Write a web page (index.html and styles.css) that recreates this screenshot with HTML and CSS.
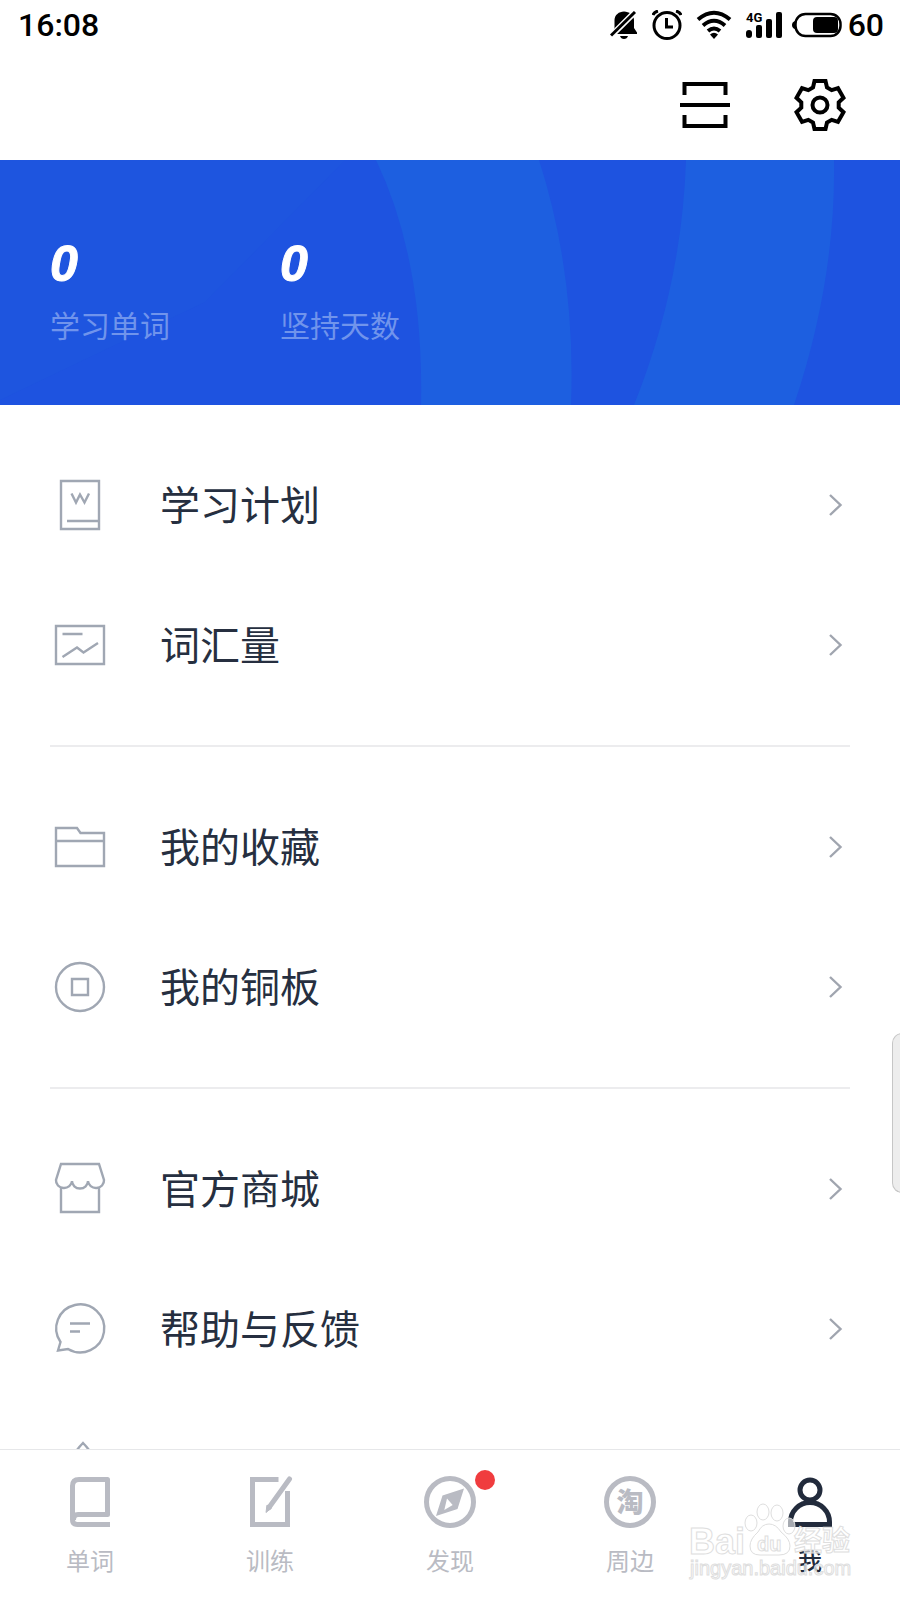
FILE: index.html
```html
<!DOCTYPE html>
<html lang="zh-CN">
<head>
<meta charset="utf-8">
<meta name="viewport" content="width=device-width, initial-scale=1">
<title>我</title>
<link rel="stylesheet" href="styles.css">
</head>
<body>
<div class="app">
  <div class="status">
    <span class="status-time">16:08</span>
    <div class="status-icons">
      <svg width="28" height="28" viewBox="0 0 28 28"><path d="M14 0.500C19 0.500 24 4 24 9V17L27 21.500V23H2L4.500 17V9C4.500 4 9 0.500 14 0.500ZM10 25H18Q17 28 14 28T10 25Z"/><path d="M2 24L26 0" stroke="#fff" stroke-width="6"/><path d="M1 24.500L25 1" stroke="#000" stroke-width="3"/></svg>
      <svg width="30" height="30" viewBox="0 0 30 30" fill="none" stroke="#000" stroke-width="3"><circle cx="15" cy="15.500" r="13"/><path d="M14.500 8V17H21"/><path d="M1 5Q2 2 6 1M24 1Q28 2 29 5"/></svg>
      <svg width="36" height="30" viewBox="0 0 36 30" fill="none" stroke="#000" stroke-width="4"><path d="M2 9.500Q18 -4 34 9.500M7 15.500Q18 6 29 15.500M12 21Q18 16 24 21"/><path d="M14 24.500Q18 21 22 24.500L18 29Z" fill="#000" stroke="none"/></svg>
      <svg class="signal" width="36" height="32" viewBox="0 0 36 32"><text x="0" y="13" class="net-label">4G</text><rect x="0" y="21" width="6" height="8" rx="3"/><rect x="10" y="16" width="6" height="13" rx="2"/><rect x="20" y="10" width="6" height="19" rx="2"/><rect x="30" y="3" width="6" height="26" rx="2"/></svg>
      <svg class="battery" width="50" height="26" viewBox="0 0 50 26"><rect x="3.500" y="2" width="45" height="22" rx="10" fill="none" stroke="#000" stroke-width="2.500"/><path d="M3 9V17Q0 16 0 13T3 9Z"/><rect x="21" y="5" width="25" height="16" rx="4"/></svg>
      <span class="status-level">60</span>
    </div>
  </div>
  <header class="topbar">
    <button class="icon-btn" type="button" aria-label="扫一扫"><svg width="50" height="52" viewBox="0 0 50 52" fill="none" stroke="#000" stroke-width="4"><path d="M4.500 16V5H45.500V16M0 26H50M4.500 36V47H45.500V36"/></svg></button>
    <button class="icon-btn" type="button" aria-label="设置"><svg width="52" height="52" viewBox="-26 -26 52 52" fill="none" stroke="#000" stroke-width="4"><path d="M-7 -17.500L-5.500 -24H5.500L7 -17.500L11.700 -14.800L18 -16.800L23.500 -7.200L18.700 -2.700V2.700L23.500 7.200L18 16.800L11.700 14.800L7 17.500L5.500 24H-5.500L-7 17.500L-11.700 14.800L-18 16.800L-23.500 7.200L-18.700 2.700V-2.700L-23.500 -7.200L-18 -16.800L-11.700 -14.800Z"/><circle r="7.500"/></svg></button>
  </header>
  <section class="banner">
    <svg class="banner-art" viewBox="0 0 900 245" preserveAspectRatio="none" aria-hidden="true"><path d="M0 0H345L205 142L0 240Z" fill="#1e56dd" opacity=".6"/><path d="M376 0Q424 100 421 245H571Q576 115 539 0Z" fill="#1d5fe0"/><path d="M686 0Q682 125 634 245H794Q836 120 834 0Z" fill="#1d5fe0"/></svg>
    <div class="stat"><strong class="stat-value">0</strong><span class="stat-label">学习单词</span></div>
    <div class="stat"><strong class="stat-value">0</strong><span class="stat-label">坚持天数</span></div>
  </section>
  <main class="menu">
    <div class="group">
      <a class="row" href="#plan"><svg class="row-icon" viewBox="0 0 60 60"><path d="M11 6H49V54H11ZM17 46H49"/><path d="M21.500 18.500L26 27.500L30 19.500L34.500 27.500L39 18.500"/></svg><span class="row-text">学习计划</span><svg class="chevron" viewBox="0 0 24 24"><path d="M4 2L14.500 12L4 22"/></svg></a>
      <a class="row" href="#vocabulary"><svg class="row-icon" viewBox="0 0 60 60"><path d="M6 11H54V49H6ZM12.500 19H32.500M12.500 42L27 32.500L33.500 37.500L48 28"/></svg><span class="row-text">词汇量</span><svg class="chevron" viewBox="0 0 24 24"><path d="M4 2L14.500 12L4 22"/></svg></a>
    </div>
    <div class="group">
      <a class="row" href="#favorites"><svg class="row-icon" viewBox="0 0 60 60"><path d="M6 11H27L30.500 16H54V49H6ZM6 24H54"/></svg><span class="row-text">我的收藏</span><svg class="chevron" viewBox="0 0 24 24"><path d="M4 2L14.500 12L4 22"/></svg></a>
      <a class="row" href="#coins"><svg class="row-icon" viewBox="0 0 60 60"><circle cx="30" cy="30" r="24"/><path d="M22 22H38V38H22Z"/></svg><span class="row-text">我的铜板</span><svg class="chevron" viewBox="0 0 24 24"><path d="M4 2L14.500 12L4 22"/></svg></a>
    </div>
    <div class="group">
      <a class="row" href="#shop"><svg class="row-icon" viewBox="0 0 60 60"><path d="M11 5H49L54 21A8 7.500 0 0 1 38 22A8 7.500 0 0 1 22 22A8 7.500 0 0 1 6 21ZM11 29V53H49V29"/></svg><span class="row-text">官方商城</span><svg class="chevron" viewBox="0 0 24 24"><path d="M4 2L14.500 12L4 22"/></svg></a>
      <a class="row" href="#help"><svg class="row-icon" viewBox="0 0 60 60"><path d="M10.500 43A24 24 0 1 1 18 50L8 51.500ZM20 24.500H40M20 32.500H30"/></svg><span class="row-text">帮助与反馈</span><svg class="chevron" viewBox="0 0 24 24"><path d="M4 2L14.500 12L4 22"/></svg></a>
      <a class="row" href="#about"><svg class="row-icon" viewBox="0 0 60 60"><path d="M24 16Q27 10 33 4Q39 10 42 16V50H24Z"/></svg><span class="row-text">关于我们</span><svg class="chevron" viewBox="0 0 24 24"><path d="M4 2L14.500 12L4 22"/></svg></a>
    </div>
  </main>
  <nav class="tabs">
    <a class="tab" href="#words"><svg class="tab-icon" viewBox="0 0 60 60"><path d="M50 52.500H17.500Q12.500 52.500 12.500 47.500V14Q12.500 7.500 19 7.500H47.500V42.500H18Q13.500 42.500 13.500 48" stroke-linejoin="round"/></svg><span>单词</span></a>
    <a class="tab" href="#train"><svg class="tab-icon" viewBox="0 0 60 60"><path d="M38.500 7.500H12.500V52.500H47.500V19"/><path d="M49.500 7L29 35.500" stroke-linecap="round"/><path d="M27 33L31.500 36L26 40.500Z" fill="currentColor" stroke-width="1"/></svg><span>训练</span></a>
    <a class="tab" href="#discover"><span class="tab-figure"><svg class="tab-icon" viewBox="0 0 60 60"><circle cx="30" cy="30" r="23.500"/><path d="M44 16.500L22.500 23.500L16 44L37.500 37ZM27 26.500L32.700 33L24.300 38Z" fill="currentColor" fill-rule="evenodd" stroke="none"/></svg><i class="badge"></i></span><span>发现</span></a>
    <a class="tab" href="#around"><svg class="tab-icon" viewBox="0 0 60 60"><circle cx="30" cy="30" r="23.500"/><text x="30" y="40" text-anchor="middle" class="tao">淘</text></svg><span>周边</span></a>
    <a class="tab tab-active" href="#me" aria-current="page"><svg class="tab-icon" viewBox="0 0 60 60"><circle cx="30" cy="18" r="10"/><path d="M10.500 52.500V50A19.500 19.500 0 0 1 49.500 50V52.500Z"/></svg><span>我</span></a>
  </nav>
  <div class="edge-handle"></div>
  <svg class="watermark" width="164" height="84" viewBox="0 0 164 84" aria-hidden="true">
    <text x="1" y="52" class="wm-latin">Bai</text>
    <ellipse cx="63" cy="21" rx="6" ry="8"/><ellipse cx="75" cy="10" rx="6" ry="8"/><ellipse cx="89" cy="11" rx="6" ry="8"/><ellipse cx="101" cy="24" rx="6" ry="8"/>
    <path d="M81 22Q88 22 93 30Q102 37 102 44Q102 53 91 53H72Q62 53 62 44Q62 37 70 30Q74 22 81 22Z"/>
    <text x="69" y="49" class="wm-du">du</text>
    <text x="106" y="49" class="wm-han">经验</text>
    <text x="2" y="73" class="wm-url">jingyan.baidu.com</text>
  </svg>
</div>
</body>
</html>
```
FILE: styles.css
```css
* { box-sizing: border-box; }
body {
  margin: 0;
  background: #fff;
  color: #262f40;
  font-family: "Noto Sans CJK SC", sans-serif;
}
svg { display: block; flex: none; }
a { color: inherit; text-decoration: none; }

.app {
  position: relative;
  display: flex;
  flex-direction: column;
  height: 100vh;
  overflow: hidden;
}

.status {
  display: flex;
  flex: none;
  align-items: center;
  justify-content: space-between;
  height: 50px;
  padding: 0 16px 0 18px;
  color: #000;
  font: 500 32px/50px Roboto, sans-serif;
}
.status-icons { display: flex; align-items: center; gap: 14px; }
.net-label { font: 700 13px Roboto, sans-serif; }
.signal { overflow: visible; }
.battery { margin: 0 -8px 0 -4px; }

.topbar {
  display: flex;
  flex: none;
  align-items: center;
  justify-content: flex-end;
  gap: 64px;
  height: 110px;
  padding: 0 54px;
}
.icon-btn { padding: 0; border: 0; background: none; }

.banner {
  position: relative;
  display: flex;
  flex: none;
  gap: 110px;
  height: 245px;
  padding: 74px 50px 0;
  background: #1e53e0;
  color: #fff;
}
.banner-art { position: absolute; inset: 0; width: 100%; height: 100%; }
.stat { position: relative; display: flex; flex-direction: column; gap: 10px; }
.stat-value {
  font: italic 700 50px/60px "Liberation Sans Narrow", "Liberation Sans", sans-serif;
  -webkit-text-stroke: 1px #fff;
}
.stat-label { color: #7094ec; font-size: 30px; line-height: 40px; }

.menu { flex: 1; min-height: 0; overflow: hidden; padding: 0 50px; }
.group { padding: 30px 0; }
.group + .group { border-top: 2px solid #ececee; }
.row { display: flex; align-items: center; gap: 50px; height: 140px; }
.row-icon { width: 60px; height: 60px; fill: none; stroke: #a0a7b3; stroke-width: 2.4; }
.row-text { flex: 1; padding-bottom: 4px; font-size: 40px; line-height: 60px; }
.chevron { width: 24px; height: 24px; fill: none; stroke: #a0a5af; stroke-width: 2.4; }

.tabs {
  display: grid;
  grid-template-columns: repeat(5, 1fr);
  flex: none;
  padding: 22px 0 26px;
  border-top: 1px solid #e6e7e9;
  background: #fff;
  color: #b9bbc3;
}
.tab {
  display: flex;
  flex-direction: column;
  align-items: center;
  gap: 14px;
  font-size: 24px;
  line-height: 28px;
}
.tab-active { color: #222b3c; font-weight: 500; }
.tab-icon { width: 60px; height: 60px; fill: none; stroke: currentColor; stroke-width: 5; }
.tab-figure { position: relative; }
.tao { fill: currentColor; stroke: none; font-size: 27px; font-weight: 900; }
.badge {
  position: absolute;
  top: -2px;
  right: -15px;
  width: 20px;
  height: 20px;
  border-radius: 50%;
  background: #f03c3e;
}

.edge-handle {
  position: absolute;
  top: 1033px;
  right: -2px;
  width: 10px;
  height: 160px;
  border: 1px solid #c6c6c6;
  border-radius: 10px 0 0 10px;
  background: #ededed;
}

.watermark {
  position: absolute;
  right: 48px;
  bottom: 14px;
  fill: #fff;
  fill-opacity: .6;
  stroke: #dedede;
  stroke-width: 1;
  pointer-events: none;
}
.wm-latin { font: 700 36px "Liberation Sans", sans-serif; }
.wm-du { font: 700 20px "Liberation Sans", sans-serif; }
.wm-han { font-size: 28px; font-weight: 700; }
.wm-url { font: 400 20px "Liberation Sans", sans-serif; }
```
